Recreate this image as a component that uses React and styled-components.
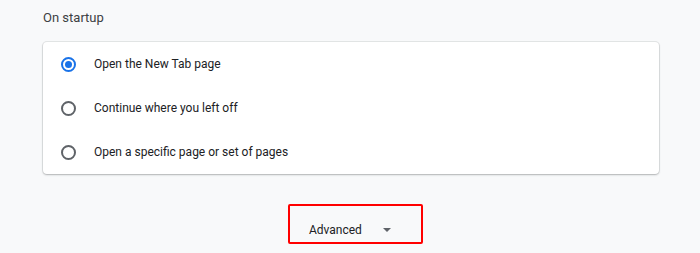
import React from "react"
import styled, { createGlobalStyle } from "styled-components"

const Global = createGlobalStyle`
  html, body {
    margin: 0;
    background: #f8f9fa;
    font-family: Roboto, "Liberation Sans", sans-serif;
    color: #202124;
  }
`

const Page = styled.div`
  width: 700px;
  height: 253px;
  padding: 10px 41px 0 43px;
  box-sizing: border-box;
  overflow: hidden;
`

const Title = styled.h2`
  margin: 0 0 16px;
  font-size: 13px;
  font-weight: 400;
  color: #3c4043;
  line-height: 16px;
`

const Card = styled.div`
  background: #fff;
  border-radius: 4px;
  box-shadow: 0 0 0 1px rgba(60, 64, 67, 0.1), 0 1px 2px rgba(60, 64, 67, 0.3);
`

const Option = styled.label`
  display: flex;
  align-items: center;
  height: 44px;
  padding-left: 18px;
  font-size: 12px;
  color: #202124;
`

const Radio = styled.span`
  width: 15px;
  height: 15px;
  box-sizing: border-box;
  border-radius: 50%;
  border: 2px solid ${p => (p.checked ? "#1a73e8" : "#5f6368")};
  display: flex;
  align-items: center;
  justify-content: center;
  margin-right: 18px;
  &::after {
    content: "";
    width: 7px;
    height: 7px;
    border-radius: 50%;
    background: ${p => (p.checked ? "#1a73e8" : "transparent")};
  }
`

const Footer = styled.div`
  display: flex;
  justify-content: center;
  padding-top: 30px;
  padding-left: 9px;
`

const AdvancedButton = styled.button`
  display: flex;
  align-items: center;
  width: 135px;
  height: 40px;
  box-sizing: border-box;
  border: 2px solid #f00;
  border-radius: 2px;
  background: transparent;
  padding: 11px 0 0 19px;
  font-family: inherit;
  font-size: 12px;
  color: #202124;
`

const Arrow = styled.span`
  margin-left: 21px;
  width: 0;
  height: 0;
  border-left: 4px solid transparent;
  border-right: 4px solid transparent;
  border-top: 4px solid #5f6368;
`

const options = [
  "Open the New Tab page",
  "Continue where you left off",
  "Open a specific page or set of pages",
]

export default function App() {
  return (
    <Page>
      <Global />
      <Title>On startup</Title>
      <Card>
        {options.map((text, i) => (
          <Option key={text}>
            <Radio checked={i === 0} />
            {text}
          </Option>
        ))}
      </Card>
      <Footer>
        <AdvancedButton>
          Advanced
          <Arrow />
        </AdvancedButton>
      </Footer>
    </Page>
  )
}
